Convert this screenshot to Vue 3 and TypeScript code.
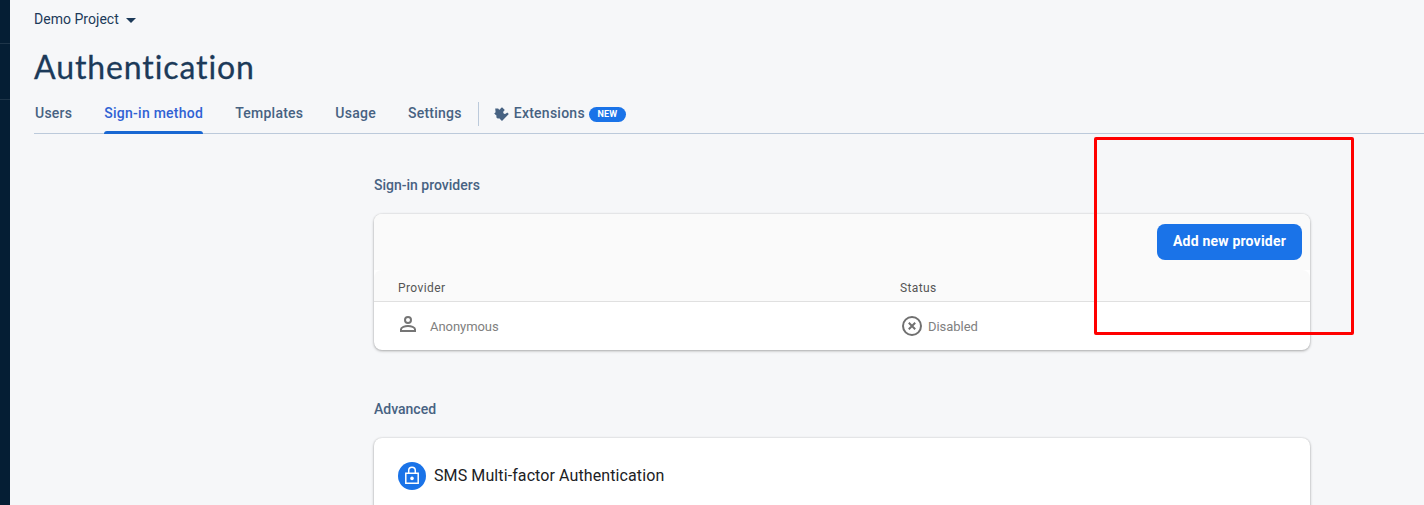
<script setup lang="ts">
interface Tab {
  label: string
  active?: boolean
}

const tabs: Tab[] = [
  { label: 'Users' },
  { label: 'Sign-in method', active: true },
  { label: 'Templates' },
  { label: 'Usage' },
  { label: 'Settings' },
]
</script>

<template>
  <div class="shell">
    <aside class="rail"><i></i><i></i></aside>
    <main class="main">
      <div class="project">
        <span>Demo Project</span>
        <svg width="10" height="5" viewBox="0 0 10 5"><path d="M0 0H10L5 5Z" fill="#1c3a59" /></svg>
      </div>
      <h1>Authentication</h1>
      <nav class="tabs">
        <a v-for="tab in tabs" :key="tab.label" class="tab" :class="{ active: tab.active }">{{ tab.label }}</a>
        <div class="ext">
          <svg width="15" height="15" viewBox="0 0 15 15" fill="#476282">
            <path d="M1.2 1.5H4.2C4.6 3 6.2 3 6.6 1.5L8 .3L10.8 3L9.4 4.4C8.6 6 10.5 7.8 12 6.6L13.2 5.4L14.8 7L8 14L5.2 11.2C3.3 12.3 1.6 10.5 2.6 8.8L.2 6.6L1.6 5.2Z" />
          </svg>
          <span>Extensions</span>
          <b class="badge">NEW</b>
        </div>
      </nav>

      <div class="content">
        <h2>Sign-in providers</h2>
        <section class="card providers">
          <div class="toolbar"><button>Add new provider</button></div>
          <div class="headwrap">
            <div class="row head"><span class="first">Provider</span><span>Status</span></div>
          </div>
          <div class="row item">
            <div class="first cell">
              <svg class="person" width="16" height="16" viewBox="0 0 16 16" fill="none" stroke="#757575" stroke-width="2">
                <circle cx="8" cy="4" r="3" />
                <path d="M1 15V13.2C1 11.2 5 10 8 10S15 11.2 15 13.2V15Z" />
              </svg>
              <span>Anonymous</span>
            </div>
            <div class="cell status">
              <svg width="20" height="20" viewBox="0 0 20 20" fill="none" stroke="#707070" stroke-width="2">
                <circle cx="10" cy="10" r="9" />
                <path d="M6.8 6.8L13.2 13.2M13.2 6.8L6.8 13.2" />
              </svg>
              <span>Disabled</span>
            </div>
          </div>
        </section>
        <h2 class="advanced">Advanced</h2>
        <section class="card mfa">
          <svg width="28" height="28" viewBox="0 0 28 28" fill="none">
            <circle cx="14" cy="14" r="14" fill="#1a73e8" />
            <path d="M7.8 11.3H20.2V21.3H7.8ZM10.7 11V8.6A3.3 3.3 0 0 1 17.3 8.6V11" stroke="#fff" stroke-width="1.5" />
            <circle cx="14" cy="16.4" r="1.8" fill="#fff" />
          </svg>
          <span>SMS Multi-factor Authentication</span>
        </section>
      </div>
      <div class="highlight"></div>
    </main>
  </div>
</template>

<style>
body { overflow: hidden; background: #f6f7f9; }
</style>

<style scoped>
* { box-sizing: border-box; }
.shell { display: flex; height: 505px; overflow: hidden; background: #f6f7f9; font-family: Roboto, sans-serif; color: #476282; }
.rail { width: 10px; flex: none; background: #051e34; padding-top: 43px; }
.rail i { display: block; height: 1px; background: #1e3549; margin-bottom: 55px; }
.main { flex: 1; min-width: 0; padding-left: 24px; }
.project { display: flex; align-items: center; height: 20px; margin-top: 9px; gap: 7px; font-size: 14px; letter-spacing: .03px; color: #1c3a59; }
.project svg { margin-top: 2px; }
h1 { margin: 18px 0 0; font: 400 32px/40px Lato, sans-serif; color: #1c3a59; letter-spacing: .9px; -webkit-text-stroke: .3px #1c3a59; }
.tabs { display: flex; height: 47px; border-bottom: 1px solid #bccadb; gap: 32px; font-size: 14px; font-weight: 500; line-height: 20px; letter-spacing: .25px; padding-top: 16px; }
.tab { position: relative; white-space: nowrap; }
.tab:first-child { padding-left: 1px; }
.active { color: #3062d4; }
.active::after { content: ''; position: absolute; left: 0; right: 0; bottom: -1px; height: 3px; border-radius: 3px 3px 0 0; background: #1967d2; }
.ext { display: flex; height: 24px; margin: -1px 0 0 -16px; padding-left: 15px; border-left: 1px solid #bccadb; align-items: center; }
.ext span { margin-left: 5px; margin-top: -2px; }
.badge { display: flex; align-items: center; justify-content: center; width: 37px; height: 15px; margin-left: 4px; border-radius: 8px; background: #1a73e8; color: #fff; font-size: 9px; font-weight: 700; letter-spacing: .2px; }
.content { width: 936px; margin-left: 340px; padding-top: 41px; }
h2 { margin: 0; font-size: 14px; line-height: 20px; font-weight: 500; letter-spacing: 0; }
.card { border-radius: 8px; background: #fff; box-shadow: 0 1px 3px rgba(0,0,0,.3), 0 0 2px rgba(0,0,0,.12); overflow: hidden; }
.providers { margin-top: 19px; height: 136px; }
.toolbar { height: 56px; padding: 10px 8px; display: flex; justify-content: flex-end; background: #fafafa; }
button { width: 145px; height: 36px; border: 0; border-radius: 8px; padding: 0 0 2px; background: #1a73e8; color: #fff; font: 700 14px Roboto, sans-serif; letter-spacing: .2px; }
.row { display: flex; padding-left: 24px; }
.first { width: 502px; }
.head { height: 32px; border-bottom: 1px solid #e0e0e0; border-radius: 8px 8px 0 0; background: #fafafa; color: #555; font-size: 12px; font-weight: 400; line-height: 16px; padding-top: 10px; letter-spacing: .4px; }
.item { height: 48px; color: #808080; font-size: 13px; letter-spacing: -.05px; }
.cell { display: flex; align-items: center; }
.person { margin: -4px 14px 0 2px; }
.status { padding-left: 2px; gap: 6px; }
.advanced { margin-top: 49px; }
.mfa { margin-top: 19px; height: 100px; padding: 24px; display: flex; align-items: flex-start; gap: 8px; color: #202124; font-size: 16px; line-height: 28px; letter-spacing: .1px; }
.highlight { position: absolute; left: 1094px; top: 137px; width: 260px; height: 198px; border: 3px solid red; border-radius: 2px; }
</style>
